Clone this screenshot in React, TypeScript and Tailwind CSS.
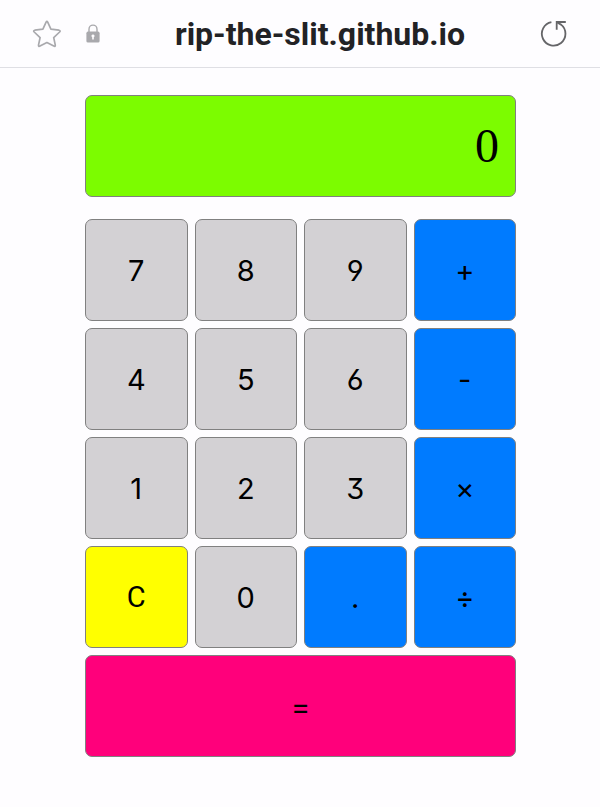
import { useState } from "react";

type Key = { label: string; name: string; kind: "digit" | "operator" | "clear" | "equals" };

const keys: Key[] = [
  { label: "7", name: "7", kind: "digit" },
  { label: "8", name: "8", kind: "digit" },
  { label: "9", name: "9", kind: "digit" },
  { label: "+", name: "plus", kind: "operator" },
  { label: "4", name: "4", kind: "digit" },
  { label: "5", name: "5", kind: "digit" },
  { label: "6", name: "6", kind: "digit" },
  { label: "-", name: "minus", kind: "operator" },
  { label: "1", name: "1", kind: "digit" },
  { label: "2", name: "2", kind: "digit" },
  { label: "3", name: "3", kind: "digit" },
  { label: "×", name: "times", kind: "operator" },
  { label: "C", name: "clear", kind: "clear" },
  { label: "0", name: "0", kind: "digit" },
  { label: ".", name: "point", kind: "operator" },
  { label: "÷", name: "divide", kind: "operator" },
  { label: "=", name: "equals", kind: "equals" },
];

const keyStyles: Record<Key["kind"], string> = {
  digit: "bg-[#d3d1d4]",
  operator: "bg-[#007bff]",
  clear: "bg-[#ffff00] font-['Roboto',sans-serif]",
  equals: "col-span-4 bg-[#ff007b]",
};

function StarIcon() {
  return (
    <svg viewBox="0 0 30 30" className="size-[30px]" fill="none" stroke="#a9a9ad" strokeWidth="1.7" strokeLinejoin="round" aria-hidden="true">
      <path d="M14.1 3.1 Q14.9 1.6 15.7 3.1 L18.9 10.2 L27 11.2 Q28.9 11.7 27.6 13 L21.7 18.6 L23.3 26.1 Q23.4 27.9 21.8 27.1 L14.9 23.5 L8 27.1 Q6.4 27.9 6.5 26.1 L8.1 18.6 L2.2 13 Q0.9 11.7 2.8 11.2 L10.9 10.2 Z" />
    </svg>
  );
}

function LockIcon() {
  return (
    <svg viewBox="0 0 14 20" className="h-5 w-[14px]" aria-hidden="true">
      <path d="M3 9 V5.2 a4 4.1 0 0 1 8 0 V9" fill="none" stroke="#a9a9ad" strokeWidth="1.4" />
      <rect x="0.4" y="7.6" width="13.2" height="11" rx="1.6" fill="#a9a9ad" />
      <path d="M7 10.4 a1.5 1.5 0 0 1 .8 2.8 V15.6 H6.2 V13.2 A1.5 1.5 0 0 1 7 10.4 Z" fill="#fefdff" />
    </svg>
  );
}

function ReloadIcon() {
  return (
    <svg viewBox="0 0 28 28" className="size-7" fill="none" stroke="#656568" strokeWidth="1.8" aria-hidden="true">
      <path d="M11.4 2.2 A11.8 11.8 0 1 0 20.8 4.4" />
      <path d="M16.7 9.8 V2 H25.8" />
      <path d="M16.9 2.2 L21 4.6" />
    </svg>
  );
}

export default function App() {
  const [display, setDisplay] = useState("0");

  const press = (label: string) => {
    if (label === "C") {
      setDisplay("0");
    } else if (label === "=") {
      const parts = display.match(/^(-?[\d.]+)([+\-×÷])([\d.]+)$/);
      if (!parts) return;
      const a = Number(parts[1]);
      const b = Number(parts[3]);
      const results: Record<string, number> = { "+": a + b, "-": a - b, "×": a * b, "÷": a / b };
      setDisplay(String(results[parts[2]]));
    } else {
      setDisplay(display === "0" && /\d/.test(label) ? label : display + label);
    }
  };

  return (
    <div className="min-h-screen bg-[#fefdff] text-black">
      <header className="flex h-[68px] items-center border-b border-[#dfdfe4] pr-8 pl-8">
        <button type="button" aria-label="Bookmark">
          <StarIcon />
        </button>
        <span className="ml-6">
          <LockIcon />
        </span>
        <h1 className="min-w-0 flex-1 truncate text-center font-['Roboto',sans-serif] text-[32px] leading-10 font-bold text-[#222225]">
          rip-the-slit.github.io
        </h1>
        <button type="button" aria-label="Reload">
          <ReloadIcon />
        </button>
      </header>
      <main className="pt-[27px] pr-[84px] pb-10 pl-[85px]">
        <output
          aria-label="Result"
          className="flex h-[102px] items-center justify-end overflow-hidden rounded-[7px] border border-[#808080] bg-[#7cfc00] px-4 font-['Liberation_Serif',serif] text-[48px] leading-none"
        >
          {display}
        </output>
        <div className="mt-[22px] grid auto-rows-[102px] grid-cols-4 gap-[7px] font-['Inter',sans-serif] text-[29px] [font-feature-settings:'cv03','cv04','cv09']">
          {keys.map((key) => (
            <button
              key={key.name}
              type="button"
              aria-label={key.name}
              onClick={() => press(key.label)}
              className={`rounded-[7px] border border-[#808080] leading-none ${keyStyles[key.kind]}`}
            >
              {key.label}
            </button>
          ))}
        </div>
      </main>
    </div>
  );
}
